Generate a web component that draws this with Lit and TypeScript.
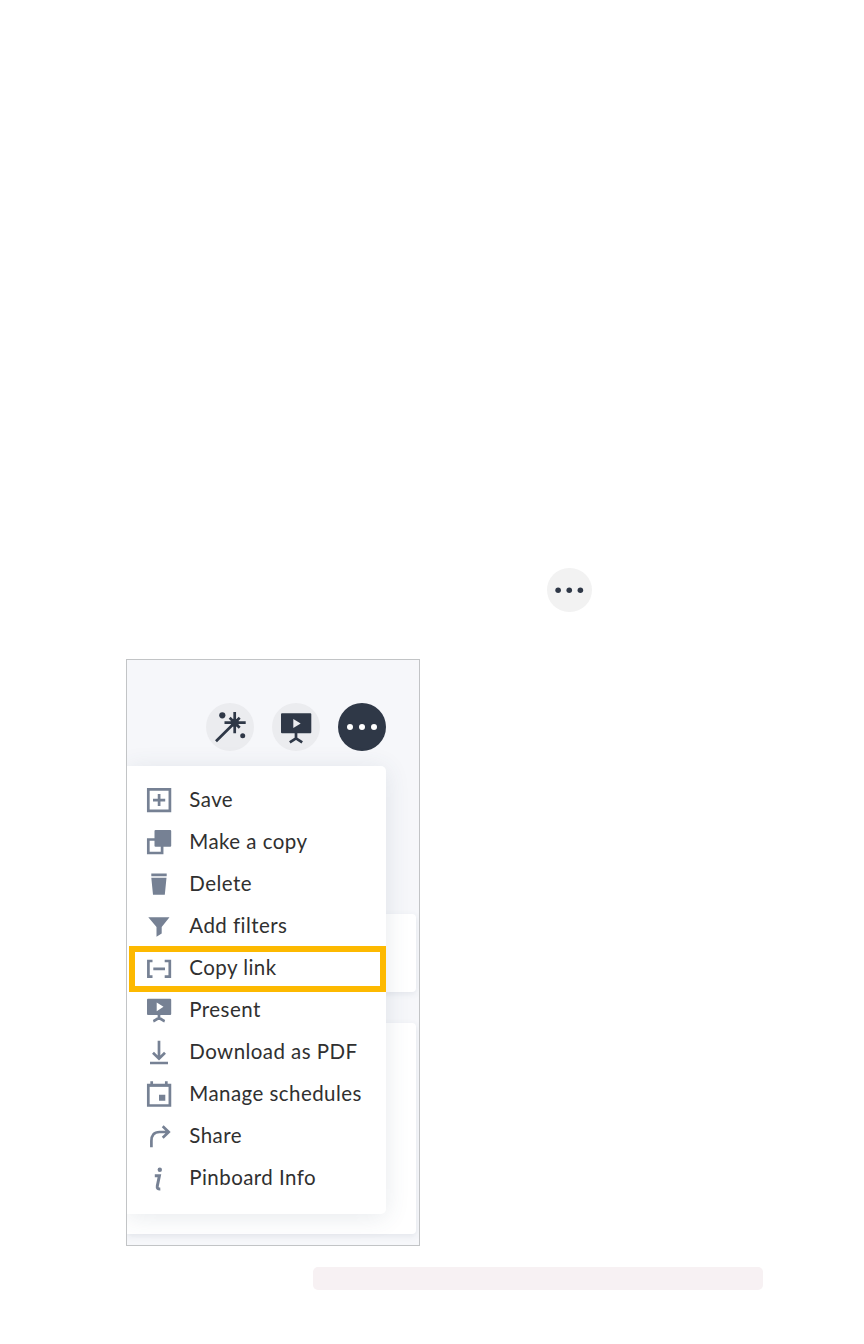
import { LitElement, html, css, svg } from 'lit';
import { customElement, property } from 'lit/decorators.js';

const icons: Record<string, unknown> = {
    save: svg`<path class="line" d="M1.3 1.3h21.6v21.6H1.3zM12.1 6v12M6 12.1h12.2"/>`,
    copy: svg`
        <path class="line" d="M8 9.5H1.3v13.5h13.8V16"/>
        <rect x="7.5" y="0" width="16.7" height="16.7" rx="1"/>`,
    trash: svg`<path d="M4.3 1.5h15.4v2.8H4.3zM4.3 5.7h15.2l-1.7 17H6z"/>`,
    filter: svg`<path d="M1.3 3.3h21.2L14.7 13v6.6L9.5 22.8V13z"/>`,
    link: svg`<path class="line" d="M5.5 5H1.4v15.6h4.1M17.7 5h5.1v15.6h-5.1M6.3 12.8H18"/>`,
    present: svg`
        <path fill-rule="evenodd" d="M1 .7h22.2a1 1 0 0 1 1 1V16a1 1 0 0 1-1 1H1a1 1 0 0 1-1-1V1.7a1 1 0 0 1 1-1zM9.7 4.500V13.200L16.500 8.850z"/>
        <path class="line" d="M12 16.5V20M6.3 23.3c1.500-.5 3-2 5.700-3.300 2.700 1.300 4.200 2.800 5.700 3.300"/>`,
    download: svg`<path class="line" d="M12 .7v18M6 12.7l6 6 6-6M3 23h18"/>`,
    calendar: svg`
        <path class="line" d="M1.3 3.2h21.6v20.3H1.3zM4.7-.8v4M19.3-.8v4"/>
        <path d="M1 2h22v2.8H1zM12 12.7h6.3v6H12z"/>`,
    share: svg`<path class="line" d="M4.4 23.3V17C4.4 11.3 7 8 12.5 8h9M15.7 2.3L21.7 8l-6 5.7"/>`,
    info: svg`
        <circle cx="12.8" cy="3.8" r="2.2"/>
        <path class="line thick" d="M7.8 9.8h4.600L10.300 20q-.6 3.200 3 3"/>`,
    wand: svg`
        <circle cx="16.3" cy="12.3" r="3.1"/>
        <circle cx="36.7" cy="32.7" r="2.5"/>
        <path class="line" d="M28.7 9v21.3M18.5 19.7h21.2M10 38.3L33.700 14.700M23.700 14.700l10 10"/>
        <circle cx="28.7" cy="19.7" r="4"/>`,
    screen: svg`
        <path fill-rule="evenodd" d="M10 10.3h28.3a1 1 0 0 1 1 1v18a1 1 0 0 1-1 1H10a1 1 0 0 1-1-1v-18a1 1 0 0 1 1-1zM21.3 16v9L28.7 20.5z"/>
        <path class="line" d="M24 30v6M17.8 39.3l6.2-4 6.2 4"/>`,
    dots: svg`
        <circle cx="12" cy="23.9" r="3"/>
        <circle cx="24" cy="23.9" r="3"/>
        <circle cx="36" cy="23.9" r="3"/>`,
};

const menuItems = [
    { icon: 'save', label: 'Save' },
    { icon: 'copy', label: 'Make a copy' },
    { icon: 'trash', label: 'Delete' },
    { icon: 'filter', label: 'Add filters' },
    { icon: 'link', label: 'Copy link', highlighted: true },
    { icon: 'present', label: 'Present' },
    { icon: 'download', label: 'Download as PDF' },
    { icon: 'calendar', label: 'Manage schedules' },
    { icon: 'share', label: 'Share' },
    { icon: 'info', label: 'Pinboard Info' },
];

@customElement('pin-icon')
export class PinIcon extends LitElement {
    static styles = css`
        :host {
            display: block;
            flex: none;
        }
        svg {
            display: block;
            width: 100%;
            height: 100%;
            overflow: visible;
            fill: currentColor;
        }
        .line {
            fill: none;
            stroke: currentColor;
            stroke-width: 2.7;
        }
        .thick {
            stroke-width: 3;
        }
    `;

    @property() name = '';
    @property({ type: Number }) box = 24;

    render() {
        return html`<svg viewBox="0 0 ${this.box} ${this.box}">${icons[this.name]}</svg>`;
    }
}

@customElement('pinboard-menu')
export class PinboardMenu extends LitElement {
    static styles = css`
        :host {
            display: block;
            box-sizing: border-box;
            padding: 13.3px 0 14px;
            background: #fff;
            border-radius: 0 5px 5px 0;
            box-shadow: 0 3px 24px rgba(60, 80, 110, 0.12);
        }
        .item {
            position: relative;
            display: flex;
            align-items: center;
            gap: 18px;
            height: 42px;
            padding-left: 20.3px;
            color: #303030;
            font: 20.5px/42px Lato, "Open Sans", sans-serif;
            letter-spacing: 0.44px;
            white-space: nowrap;
        }
        pin-icon {
            width: 24px;
            height: 24px;
            color: #768194;
        }
        .label {
            margin-top: -2px;
        }
        .highlighted::after {
            content: "";
            position: absolute;
            inset: -1.3px 0 -2.7px 2px;
            border: 6px solid #fdb900;
        }
    `;

    render() {
        return html`
            ${menuItems.map((item) => html`
                <div class="item ${item.highlighted ? 'highlighted' : ''}">
                    <pin-icon name=${item.icon}></pin-icon>
                    <span class="label">${item.label}</span>
                </div>
            `)}
        `;
    }
}

@customElement('app-root')
export class AppRoot extends LitElement {
    static styles = css`
        :host {
            display: flex;
            flex-direction: column;
            box-sizing: border-box;
            width: 864px;
            height: 1344px;
            padding: 567.5px 0 0 126px;
            background: #fff;
            overflow: hidden;
        }
        .round {
            width: 48px;
            height: 48px;
            border-radius: 50%;
            background: #ebecef;
            color: #2f3847;
        }
        .more {
            width: 44.5px;
            height: 44.5px;
            margin-left: 421px;
            background: #f2f2f2;
        }
        .board {
            position: relative;
            box-sizing: border-box;
            width: 294px;
            height: 587px;
            margin-top: 47px;
            padding: 42.6px 3px 0 0;
            border: 1px solid #c2c4c6;
            background: #f6f7fa;
            overflow: hidden;
        }
        .actions {
            display: flex;
            justify-content: flex-end;
            gap: 18px;
            padding-right: 30px;
        }
        .active {
            background: #2f3847;
            color: #fff;
        }
        .card {
            height: 78px;
            margin-top: 163.4px;
            background: #fff;
            border-radius: 0 4px 4px 0;
            box-shadow: 0 2px 6px rgba(60, 80, 110, 0.1);
        }
        .card.tall {
            height: 211px;
            margin-top: 31px;
        }
        pinboard-menu {
            position: absolute;
            top: 106px;
            left: 0;
            width: 259px;
            height: 447.5px;
        }
        .code {
            width: 450px;
            height: 23px;
            margin: 21px 0 0 187px;
            border-radius: 5px;
            background: #f7f1f3;
        }
    `;

    render() {
        return html`
            <pin-icon class="round more" name="dots" box="48"></pin-icon>
            <div class="board">
                <div class="actions">
                    <pin-icon class="round" name="wand" box="48"></pin-icon>
                    <pin-icon class="round" name="screen" box="48"></pin-icon>
                    <pin-icon class="round active" name="dots" box="48"></pin-icon>
                </div>
                <div class="card"></div>
                <div class="card tall"></div>
                <pinboard-menu></pinboard-menu>
            </div>
            <div class="code"></div>
        `;
    }
}
